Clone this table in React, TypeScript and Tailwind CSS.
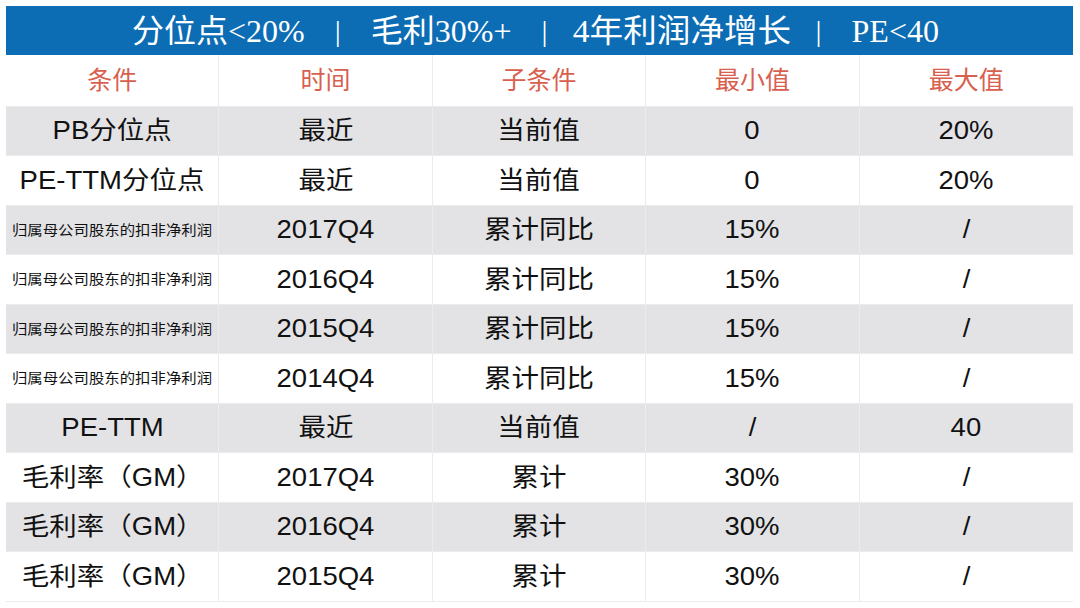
import React from "react";

const sans = { fontFamily: '"Liberation Sans", "Noto Sans CJK SC", sans-serif' };
const serif = { fontFamily: '"Liberation Serif", "Noto Sans CJK SC", serif' };

type Row = { c: string; t: string; s: string; min: string; max: string; small?: boolean };

const rows: Row[] = [
  { c: "PB分位点", t: "最近", s: "当前值", min: "0", max: "20%" },
  { c: "PE-TTM分位点", t: "最近", s: "当前值", min: "0", max: "20%" },
  { c: "归属母公司股东的扣非净利润", t: "2017Q4", s: "累计同比", min: "15%", max: "/", small: true },
  { c: "归属母公司股东的扣非净利润", t: "2016Q4", s: "累计同比", min: "15%", max: "/", small: true },
  { c: "归属母公司股东的扣非净利润", t: "2015Q4", s: "累计同比", min: "15%", max: "/", small: true },
  { c: "归属母公司股东的扣非净利润", t: "2014Q4", s: "累计同比", min: "15%", max: "/", small: true },
  { c: "PE-TTM", t: "最近", s: "当前值", min: "/", max: "40" },
  { c: "毛利率（GM）", t: "2017Q4", s: "累计", min: "30%", max: "/" },
  { c: "毛利率（GM）", t: "2016Q4", s: "累计", min: "30%", max: "/" },
  { c: "毛利率（GM）", t: "2015Q4", s: "累计", min: "30%", max: "/" },
];

function Cell({ text, small, last, gray }: { text: string; small?: boolean; last?: boolean; gray: boolean }) {
  return (
    <div
      className={
        "flex items-center justify-center " +
        (last ? "" : gray ? "border-r border-[#ececef]" : "border-r border-[#ececec]")
      }
    >
      <span
        className={
          "inline-block scale-x-110 text-[#111111] leading-none whitespace-nowrap " +
          (small ? "text-[14px]" : "text-[25px]")
        }
        style={sans}
      >
        {text}
      </span>
    </div>
  );
}

export default function App() {
  const headers = ["条件", "时间", "子条件", "最小值", "最大值"];
  return (
    <div className="w-[1080px] h-[608px] bg-white px-[6px] pt-[6px] overflow-hidden">
      <div className="w-[1067px]">
        <div
          className="h-[49px] bg-[#0c6db4] flex items-center justify-center gap-[30px] text-white text-[32px] leading-none pr-[8px]"
          style={serif}
        >
          <span>分位点&lt;20%</span>
          <span className="text-[30px]">|</span>
          <span>毛利30%+</span>
          <span className="text-[30px]">|</span>
          <span className="inline-block scale-x-105">4年利润净增长</span>
          <span className="text-[30px]">|</span>
          <span>PE&lt;40</span>
        </div>
        <div className="grid grid-cols-5 h-[51px] bg-white">
          {headers.map((h, i) => (
            <div
              key={h}
              className={"flex items-center justify-center " + (i < 4 ? "border-r border-[#ececec]" : "")}
            >
              <span className="text-[25px] leading-none text-[#d8604e]" style={serif}>
                {h}
              </span>
            </div>
          ))}
        </div>
        {rows.map((r, i) => {
          const gray = i % 2 === 0;
          return (
            <div
              key={i}
              className={
                "grid grid-cols-5 h-[49.5px] " +
                (gray ? "bg-[#e3e3e6] border-y border-[#ebebed]" : "bg-white")
              }
            >
              <Cell text={r.c} small={r.small} gray={gray} />
              <Cell text={r.t} gray={gray} />
              <Cell text={r.s} gray={gray} />
              <Cell text={r.min} gray={gray} />
              <Cell text={r.max} gray={gray} last />
            </div>
          );
        })}
        <div className="h-px bg-[#ececec]" />
      </div>
    </div>
  );
}
